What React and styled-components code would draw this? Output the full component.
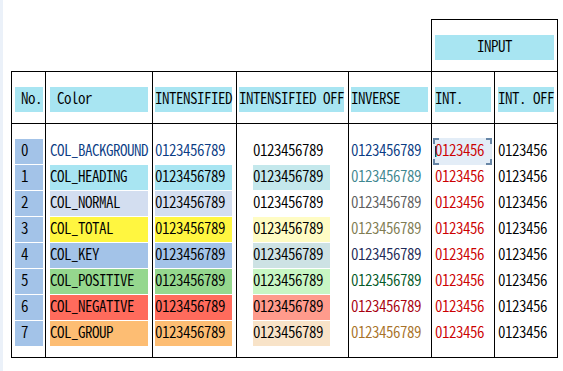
import React from "react";
import styled, { createGlobalStyle } from "styled-components";

const GlobalStyle = createGlobalStyle`
  html, body {
    margin: 0;
    padding: 0;
    background: #fff;
  }
  body {
    font-family: "Noto Sans CJK JP", "DejaVu Sans Mono", monospace;
    font-size: 15px;
    color: #000;
  }
`;

const HEAD_BG = "#a8e5f2";
const NUM_BG = "#a3c3e8";
const INT_RED = "#cc0000";

const rows = [
  { name: "COL_BACKGROUND", fg: "#0a3c84", bg: null, off: null, inv: "#0a3c84" },
  { name: "COL_HEADING", bg: "#a8e5f2", off: "#c4e8ec", inv: "#3f8790" },
  { name: "COL_NORMAL", bg: "#d3def0", off: null, inv: "#5e5e5e" },
  { name: "COL_TOTAL", bg: "#fff640", off: "#fffcc4", inv: "#807c52" },
  { name: "COL_KEY", bg: "#a3c3e8", off: "#cde2e4", inv: "#1e2a58" },
  { name: "COL_POSITIVE", bg: "#95d78e", off: "#c8f6c4", inv: "#055a28" },
  { name: "COL_NEGATIVE", bg: "#ff6b5c", off: "#ff9b8c", inv: "#a8000e" },
  { name: "COL_GROUP", bg: "#fdbd73", off: "#f8e3c8", inv: "#a87228" },
];

const Page = styled.div`
  display: flex;
  width: 563px;
  height: 371px;
  overflow: hidden;
`;

const Strip = styled.div`
  flex: none;
  width: 3px;
  background: #ebf1f9;
`;

const Content = styled.div`
  padding: 19px 0 0 8px;
`;

const Sheet = styled.div`
  display: grid;
  grid-template-columns: 34px 107px 84px 112px 83px 63px 64px;
  grid-template-rows: 52px 52px 235px;
`;

const Blank = styled.div`
  grid-column: span 5;
`;

const Cell = styled.div`
  box-sizing: border-box;
  display: flex;
  flex-direction: column;
  gap: 1px;
  padding: 15px 0 0 ${(p) => p.$pad}px;
  border-top: 1px solid #000;
  border-left: 1px solid #000;
  border-right: ${(p) => (p.$last ? "1px solid #000" : "none")};
  border-bottom: ${(p) => (p.$bottom ? "1px solid #000" : "none")};
  grid-column: ${(p) => (p.$span ? `span ${p.$span}` : "auto")};
`;

const Chip = styled.div`
  position: relative;
  box-sizing: border-box;
  flex: none;
  width: ${(p) => p.$w}px;
  height: 25px;
  padding: 0 0 3px ${(p) => p.$indent || 0}px;
  line-height: 22px;
  background: ${(p) => p.$bg || "transparent"};
  color: ${(p) => p.$fg || "#000"};
  text-align: ${(p) => (p.$center ? "center" : "left")};
  white-space: pre;
`;

const Glyphs = styled.span`
  position: relative;
  display: inline-block;
  font-weight: 350;
  font-feature-settings: "hwid" 1;
  letter-spacing: -0.5px;
  transform: scaleY(1.07);
  transform-origin: 50% 75%;
`;

const Focus = styled.div`
  position: absolute;
  left: -2px;
  right: -1px;
  top: -1px;
  bottom: -1px;
  background: #e3edf7;
`;

const Corner = styled.span`
  position: absolute;
  width: 4px;
  height: 4px;
  border-color: #6786a6;
  border-style: solid;
  border-width: 0;
  ${(p) => (p.$v === "top" ? "top: 0; border-top-width: 2px;" : "bottom: 0; border-bottom-width: 2px;")}
  ${(p) => (p.$h === "left" ? "left: 0; border-left-width: 2px;" : "right: 0; border-right-width: 2px;")}
`;

const Caret = styled.span`
  position: absolute;
  left: 0;
  top: 7px;
  width: 2px;
  height: 11px;
  background: #38dede;
  border-left: 1px solid #20406a;
  box-sizing: border-box;
`;

const Text = ({ children }) => <Glyphs>{children}</Glyphs>;

function App() {
  return (
    <>
      <GlobalStyle />
      <Page>
        <Strip />
        <Content>
          <Sheet>
            <Blank />
            <Cell $span={2} $pad={3} $last>
              <Chip $w={119} $bg={HEAD_BG} $center>
                <Text>INPUT</Text>
              </Chip>
            </Cell>

            <Cell $pad={3}>
              <Chip $w={28} $bg={HEAD_BG} $indent={6}>
                <Text>No.</Text>
              </Chip>
            </Cell>
            <Cell $pad={4}>
              <Chip $w={98} $bg={HEAD_BG}>
                <Text> Color</Text>
              </Chip>
            </Cell>
            <Cell $pad={2}>
              <Chip $w={77} $bg={HEAD_BG}>
                <Text>INTENSIFIED</Text>
              </Chip>
            </Cell>
            <Cell $pad={2}>
              <Chip $w={105} $bg={HEAD_BG}>
                <Text>INTENSIFIED OFF</Text>
              </Chip>
            </Cell>
            <Cell $pad={2}>
              <Chip $w={77} $bg={HEAD_BG}>
                <Text>INVERSE</Text>
              </Chip>
            </Cell>
            <Cell $pad={3}>
              <Chip $w={56} $bg={HEAD_BG}>
                <Text>INT.</Text>
              </Chip>
            </Cell>
            <Cell $pad={3} $last>
              <Chip $w={56} $bg={HEAD_BG}>
                <Text>INT. OFF</Text>
              </Chip>
            </Cell>

            <Cell $pad={3} $bottom>
              {rows.map((r, i) => (
                <Chip key={i} $w={28} $bg={NUM_BG} $indent={6}>
                  <Text>{i}</Text>
                </Chip>
              ))}
            </Cell>
            <Cell $pad={4} $bottom>
              {rows.map((r, i) => (
                <Chip key={i} $w={98} $bg={r.bg} $fg={r.fg}>
                  <Text>{r.name}</Text>
                </Chip>
              ))}
            </Cell>
            <Cell $pad={2} $bottom>
              {rows.map((r, i) => (
                <Chip key={i} $w={77} $bg={r.bg} $fg={r.fg}>
                  <Text>0123456789</Text>
                </Chip>
              ))}
            </Cell>
            <Cell $pad={16} $bottom>
              {rows.map((r, i) => (
                <Chip key={i} $w={77} $bg={r.off}>
                  <Text>0123456789</Text>
                </Chip>
              ))}
            </Cell>
            <Cell $pad={2} $bottom>
              {rows.map((r, i) => (
                <Chip key={i} $w={77} $fg={r.inv}>
                  <Text>0123456789</Text>
                </Chip>
              ))}
            </Cell>
            <Cell $pad={3} $bottom>
              {rows.map((r, i) => (
                <Chip key={i} $w={56} $fg={INT_RED}>
                  {i === 0 && (
                    <Focus>
                      <Corner $v="top" $h="left" />
                      <Corner $v="top" $h="right" />
                      <Corner $v="bottom" $h="left" />
                      <Corner $v="bottom" $h="right" />
                    </Focus>
                  )}
                  {i === 0 && <Caret />}
                  <Text>0123456</Text>
                </Chip>
              ))}
            </Cell>
            <Cell $pad={3} $bottom $last>
              {rows.map((r, i) => (
                <Chip key={i} $w={56}>
                  <Text>0123456</Text>
                </Chip>
              ))}
            </Cell>
          </Sheet>
        </Content>
      </Page>
    </>
  );
}

export default App;
